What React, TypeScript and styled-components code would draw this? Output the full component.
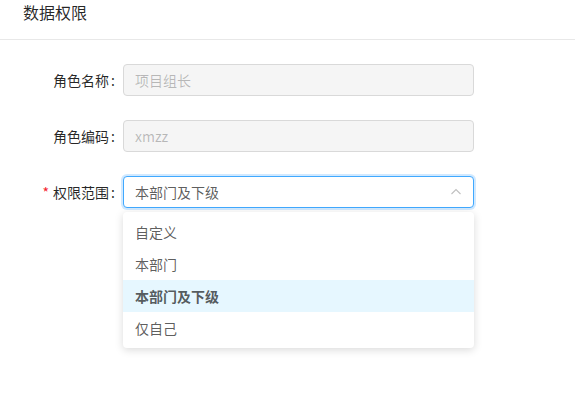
import React from "react";
import styled, { createGlobalStyle } from "styled-components";

const Global = createGlobalStyle`
  html, body { margin: 0; padding: 0; background: #fff; }
  body {
    font-family: "Noto Sans CJK SC", "Noto Sans", sans-serif;
    font-size: 14px;
    color: rgba(0,0,0,0.65);
  }
  * { box-sizing: border-box; }
`;

const Page = styled.div`
  width: 575px;
  height: 394px;
  overflow: hidden;
`;

const Header = styled.div`
  height: 40px;
  padding: 1px 23px 0;
  border-bottom: 1px solid #e8e8e8;
  font-size: 16px;
  line-height: 22px;
  color: rgba(0,0,0,0.85);
`;

const Form = styled.div`
  padding-top: 24px;
  display: flex;
  flex-direction: column;
  gap: 24px;
`;

const Row = styled.div`
  display: grid;
  grid-template-columns: 123px 351px;
  align-items: center;
  height: 32px;
`;

const Label = styled.label<{ $required?: boolean }>`
  text-align: right;
  color: rgba(0,0,0,0.85);
  line-height: 32px;
  white-space: nowrap;
  &::before {
    content: ${(p) => (p.$required ? '"*"' : '""')};
    color: #f5222d;
    margin-right: 4px;
    font-size: 14px;
  }
  &::after {
    content: ":";
    margin: 0 8px 0 2px;
  }
`;

const Input = styled.div`
  height: 32px;
  border: 1px solid #d9d9d9;
  border-radius: 4px;
  background: #f5f5f5;
  padding: 0 11px;
  line-height: 30px;
  color: rgba(0,0,0,0.25);
`;

const SelectWrap = styled.div`
  position: relative;
`;

const Select = styled.div`
  height: 32px;
  border: 1px solid #40a9ff;
  border-radius: 4px;
  background: #fff;
  box-shadow: 0 0 0 2px rgba(24,144,255,0.2);
  padding: 0 11px;
  line-height: 30px;
  color: rgba(0,0,0,0.65);
  display: flex;
  align-items: center;
  justify-content: space-between;
`;

const Arrow = styled.svg`
  width: 12px;
  height: 12px;
`;

const Dropdown = styled.div`
  position: absolute;
  top: 36px;
  left: 0;
  width: 100%;
  background: #fff;
  border-radius: 4px;
  box-shadow: 0 2px 8px rgba(0,0,0,0.15);
  padding: 4px 0;
`;

const Option = styled.div<{ $selected?: boolean }>`
  height: 32px;
  line-height: 32px;
  padding: 0 12px;
  color: rgba(0,0,0,0.65);
  font-weight: ${(p) => (p.$selected ? 600 : 400)};
  background: ${(p) => (p.$selected ? "#e6f7ff" : "transparent")};
`;

const options = ["自定义", "本部门", "本部门及下级", "仅自己"];

export default function App() {
  return (
    <Page>
      <Global />
      <Header>数据权限</Header>
      <Form>
        <Row>
          <Label>角色名称</Label>
          <Input>项目组长</Input>
        </Row>
        <Row>
          <Label>角色编码</Label>
          <Input>xmzz</Input>
        </Row>
        <Row>
          <Label $required>权限范围</Label>
          <SelectWrap>
            <Select>
              <span>本部门及下级</span>
              <Arrow viewBox="0 0 12 12">
                <path d="M1.5 8 L6 3.5 L10.5 8" fill="none" stroke="rgba(0,0,0,0.25)" strokeWidth="1.1" />
              </Arrow>
            </Select>
            <Dropdown>
              {options.map((o) => (
                <Option key={o} $selected={o === "本部门及下级"}>
                  {o}
                </Option>
              ))}
            </Dropdown>
          </SelectWrap>
        </Row>
      </Form>
    </Page>
  );
}
